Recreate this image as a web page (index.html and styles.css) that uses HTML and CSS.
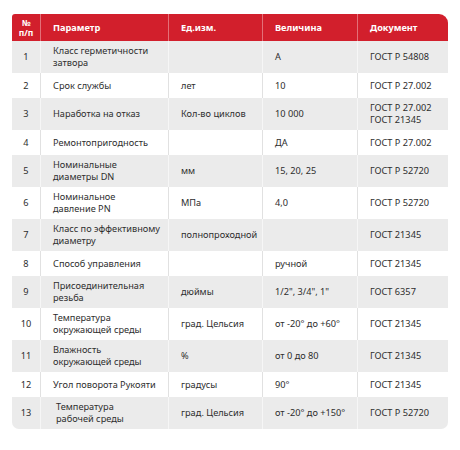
FILE: index.html
```html
<!DOCTYPE html>
<html lang="ru">
<head>
<meta charset="utf-8">
<link rel="stylesheet" href="styles.css">
</head>
<body>
<div class="wrap">
<table class="spec">
  <colgroup>
    <col class="c-num"><col class="c-param"><col class="c-unit"><col class="c-val"><col class="c-doc">
  </colgroup>
  <thead>
    <tr><th class="num">№<br>п/п</th><th>Параметр</th><th>Ед.изм.</th><th>Величина</th><th>Документ</th></tr>
  </thead>
  <tbody>
    <tr class="alt"><td class="num">1</td><td>Класс герметичности<br>затвора</td><td></td><td>А</td><td>ГОСТ Р 54808</td></tr>
    <tr><td class="num">2</td><td>Срок службы</td><td>лет</td><td>10</td><td>ГОСТ Р 27.002</td></tr>
    <tr class="alt"><td class="num">3</td><td>Наработка на отказ</td><td>Кол-во циклов</td><td>10 000</td><td>ГОСТ Р 27.002<br>ГОСТ 21345</td></tr>
    <tr><td class="num">4</td><td>Ремонтопригодность</td><td></td><td>ДА</td><td>ГОСТ Р 27.002</td></tr>
    <tr class="alt"><td class="num">5</td><td>Номинальные<br>диаметры DN</td><td>мм</td><td>15, 20, 25</td><td>ГОСТ Р 52720</td></tr>
    <tr><td class="num">6</td><td>Номинальное<br>давление PN</td><td>МПа</td><td>4,0</td><td>ГОСТ Р 52720</td></tr>
    <tr class="alt"><td class="num">7</td><td>Класс по эффективному<br>диаметру</td><td>полнопроходной</td><td></td><td>ГОСТ 21345</td></tr>
    <tr><td class="num">8</td><td>Способ управления</td><td></td><td>ручной</td><td>ГОСТ 21345</td></tr>
    <tr class="alt"><td class="num">9</td><td>Присоединительная<br>резьба</td><td>дюймы</td><td>1/2", 3/4", 1"</td><td>ГОСТ 6357</td></tr>
    <tr><td class="num">10</td><td>Температура<br>окружающей среды</td><td>град. Цельсия</td><td>от -20° до +60°</td><td>ГОСТ 21345</td></tr>
    <tr class="alt"><td class="num">11</td><td>Влажность<br>окружающей среды</td><td>%</td><td>от 0 до 80</td><td>ГОСТ 21345</td></tr>
    <tr><td class="num">12</td><td>Угол поворота Рукояти</td><td>градусы</td><td>90°</td><td>ГОСТ 21345</td></tr>
    <tr class="alt"><td class="num">13</td><td class="indent">Температура<br>рабочей среды</td><td>град. Цельсия</td><td>от -20° до +150°</td><td>ГОСТ Р 52720</td></tr>
  </tbody>
</table>
</div>
</body>
</html>
```
FILE: styles.css
```css
html, body {
  margin: 0;
  padding: 0;
  background: #ffffff;
}
.wrap {
  padding: 14px 12px;
  font-family: "Noto Sans", "DejaVu Sans", sans-serif;
  color: #2e2e2e;
}
.spec {
  width: 436px;
  table-layout: fixed;
  border-collapse: separate;
  border-spacing: 0;
  font-size: 9.2px;
  line-height: 12px;
}
.c-num { width: 28px; }
.c-param { width: 128px; }
.c-unit { width: 94px; }
.c-val { width: 95px; }
.c-doc { width: 91px; }

.spec th {
  background: #d21f2c;
  color: #ffffff;
  font-weight: 700;
  text-align: left;
  height: 27px;
  box-sizing: border-box;
  padding: 2px 12px;
  border-left: 1px solid #e37078;
  vertical-align: middle;
  line-height: 11px;
  white-space: nowrap;
}
.spec th:first-child {
  border-left: none;
  border-top-left-radius: 3px;
}
.spec th:last-child { border-top-right-radius: 9px; }
.spec th.num { text-align: center; padding: 2px 0; font-size: 8.5px; line-height: 10px; }

.spec td {
  height: 25px;
  box-sizing: border-box;
  padding: 4px 4px 4px 12px;
  vertical-align: middle;
  border-left: 1px solid #e1e1e1;
  background: #ffffff;
  white-space: nowrap;
}
.spec td:first-child { border-left: none; }
.spec td.num { text-align: center; padding: 4px 0; }
.spec td.indent { padding-left: 15px; }
.spec tr.alt td {
  background: #ebebeb;
  border-left-color: #f6f6f6;
}
.spec tr.alt td:first-child { border-left: none; }
.spec tbody tr:last-child td:first-child { border-bottom-left-radius: 7px; }
.spec tbody tr:last-child td:last-child { border-bottom-right-radius: 7px; }
```
